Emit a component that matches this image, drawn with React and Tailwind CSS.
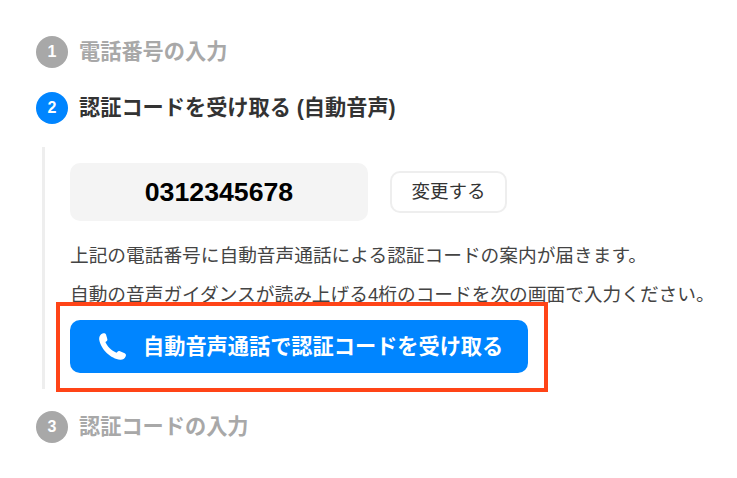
const font = { fontFamily: '"Liberation Sans", "Noto Sans CJK JP", sans-serif' }

function Step({ n, active, children }) {
  return (
    <div className="flex h-8 items-center gap-[11px]">
      <span className={active ? 'grid h-8 w-8 place-items-center rounded-full bg-[#0085ff] text-[16px] font-bold text-white' : 'grid h-8 w-8 place-items-center rounded-full bg-[#a8a8a8] text-[16px] font-bold text-white'}>
        {n}
      </span>
      <h2 className={active ? 'text-[21.2px] font-bold text-[#333333]' : 'text-[21.2px] font-bold text-[#a8a8a8]'}>{children}</h2>
    </div>
  )
}

export default function App() {
  return (
    <main style={font} className="h-[478px] w-[737px] overflow-hidden bg-white pl-[36px] pt-[36px]">
      <Step n="1">電話番号の入力</Step>
      <div className="mt-[24px]">
        <Step n="2" active>認証コードを受け取る (自動音声)</Step>
      </div>
      <section className="relative ml-[6px] mt-[23px] h-[242px] w-[680px] border-l-[3px] border-[#eeeeee] pl-[25px] pt-[16px]">
        <div className="flex items-center gap-[22px]">
          <div className="flex h-[58px] w-[298px] items-center justify-center rounded-[10px] bg-[#f4f4f4] text-[26.7px] font-bold text-black">
            0312345678
          </div>
          <button type="button" className="h-[42px] w-[117px] rounded-[10px] border-2 border-[#eeeeee] bg-white text-[18.5px] text-[#333333]">
            変更する
          </button>
        </div>
        <p className="mt-[23px] whitespace-nowrap text-[18.7px] leading-[24px] text-[#444444]">上記の電話番号に自動音声通話による認証コードの案内が届きます。</p>
        <p className="mt-[15px] whitespace-nowrap text-[18.7px] leading-[24px] text-[#444444]">自動の音声ガイダンスが読み上げる4桁のコードを次の画面で入力ください。</p>
        <button type="button" className="mt-[13px] flex h-[53px] w-[458px] items-center rounded-[10px] bg-[#0085ff] pl-[29px] text-[21.2px] font-bold text-white">
          <svg width="27" height="27" viewBox="0 0 27 27" fill="currentColor" className="mr-[17px] shrink-0">
            <path d="M3.500.5C5-.2 6.500.3 7 1.500L8.300 6C8.600 7.200 8.200 8 7.200 8.600L6.400 9.100C7.500 12.500 12.500 18 17.500 19.800L18.300 19C19 18 20 17.900 21 18.300L25.700 20.300C27 21 27.200 22.300 26.600 23.500C25.600 25.800 23.500 27 21.300 26.800C12 26 1.500 16 .2 6.500C-.1 3.800 1.300 1.500 3.500.5Z" />
          </svg>
          自動音声通話で認証コードを受け取る
        </button>
        <div className="absolute left-[11px] top-[155px] h-[90px] w-[492px] border-[4.500px] border-[#ff4417]" />
      </section>
      <div className="mt-[22px]">
        <Step n="3">認証コードの入力</Step>
      </div>
    </main>
  )
}
